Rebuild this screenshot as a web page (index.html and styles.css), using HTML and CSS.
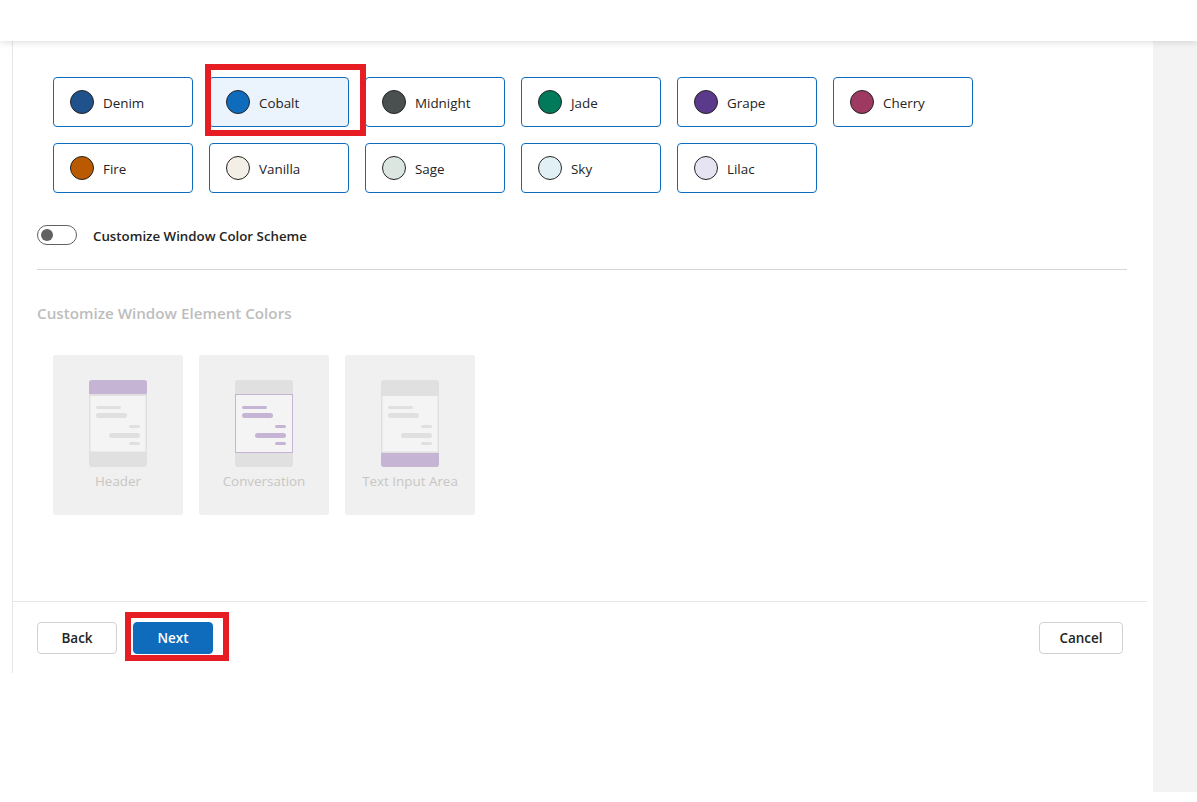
FILE: index.html
```html
<!DOCTYPE html>
<html>
<head>
<meta charset="utf-8">
<link rel="stylesheet" href="styles.css">
</head>
<body>
<header class="topbar"></header>
<div class="page">
  <main class="content">
    <section class="body">
      <div class="swatches">
        <div class="swatch"><span class="dot" style="background:#1f528b"></span><span class="sw-text">Denim</span></div>
        <div class="swatch selected"><span class="dot" style="background:#0f6cbd"></span><span class="sw-text">Cobalt</span><span class="mark mark-cobalt"></span></div>
        <div class="swatch"><span class="dot" style="background:#4a5050"></span><span class="sw-text">Midnight</span></div>
        <div class="swatch"><span class="dot" style="background:#007a5a"></span><span class="sw-text">Jade</span></div>
        <div class="swatch"><span class="dot" style="background:#5c3a8b"></span><span class="sw-text">Grape</span></div>
        <div class="swatch"><span class="dot" style="background:#9e3961"></span><span class="sw-text">Cherry</span></div>
        <div class="swatch"><span class="dot" style="background:#ba5a00"></span><span class="sw-text">Fire</span></div>
        <div class="swatch"><span class="dot" style="background:#f4efe6"></span><span class="sw-text">Vanilla</span></div>
        <div class="swatch"><span class="dot" style="background:#dbe6e0"></span><span class="sw-text">Sage</span></div>
        <div class="swatch"><span class="dot" style="background:#e1f0f4"></span><span class="sw-text">Sky</span></div>
        <div class="swatch"><span class="dot" style="background:#e6e3f3"></span><span class="sw-text">Lilac</span></div>
      </div>

      <div class="toggle-row">
        <span class="toggle"><span class="knob"></span></span>
        <span class="toggle-label">Customize Window Color Scheme</span>
      </div>

      <hr class="sep">

      <h2 class="subhead">Customize Window Element Colors</h2>

      <div class="elements">
        <div class="element">
          <svg width="58" height="87" viewBox="0 0 58 87">
            <rect width="58" height="87" rx="3" fill="#e0e0e0"/>
            <path d="M3 0h52a3 3 0 0 1 3 3v11H0V3a3 3 0 0 1 3-3z" fill="#c5b4d4"/>
            <rect x="1.5" y="16" width="55" height="55.5" fill="#f4f4f4"/>
            <rect x="7" y="26" width="25" height="3" rx="1.5" fill="#e0e0e0"/>
            <rect x="7" y="33" width="31" height="5" rx="2.5" fill="#e0e0e0"/>
            <rect x="40" y="45" width="11" height="3" rx="1.5" fill="#e0e0e0"/>
            <rect x="20" y="53" width="31" height="5" rx="2.5" fill="#e0e0e0"/>
            <rect x="40" y="62" width="11" height="3" rx="1.5" fill="#e0e0e0"/>
          </svg>
          <span class="el-label">Header</span>
        </div>
        <div class="element">
          <svg width="58" height="87" viewBox="0 0 58 87">
            <rect width="58" height="87" rx="3" fill="#e0e0e0"/>
            <rect x="0.5" y="14.5" width="57" height="58" fill="#f4f4f4" stroke="#c5b4d4"/>
            <rect x="7" y="26" width="25" height="3" rx="1.5" fill="#c5b4d4"/>
            <rect x="7" y="33" width="31" height="5" rx="2.5" fill="#c5b4d4"/>
            <rect x="40" y="45" width="11" height="3" rx="1.5" fill="#c5b4d4"/>
            <rect x="20" y="53" width="31" height="5" rx="2.5" fill="#c5b4d4"/>
            <rect x="40" y="62" width="11" height="3" rx="1.5" fill="#c5b4d4"/>
          </svg>
          <span class="el-label">Conversation</span>
        </div>
        <div class="element">
          <svg width="58" height="87" viewBox="0 0 58 87">
            <rect width="58" height="87" rx="3" fill="#e0e0e0"/>
            <rect x="1.5" y="16" width="55" height="55.5" fill="#f4f4f4"/>
            <path d="M0 73h58v11a3 3 0 0 1-3 3H3a3 3 0 0 1-3-3z" fill="#c5b4d4"/>
            <rect x="7" y="26" width="25" height="3" rx="1.5" fill="#e0e0e0"/>
            <rect x="7" y="33" width="31" height="5" rx="2.5" fill="#e0e0e0"/>
            <rect x="40" y="45" width="11" height="3" rx="1.5" fill="#e0e0e0"/>
            <rect x="20" y="53" width="31" height="5" rx="2.5" fill="#e0e0e0"/>
            <rect x="40" y="62" width="11" height="3" rx="1.5" fill="#e0e0e0"/>
          </svg>
          <span class="el-label">Text Input Area</span>
        </div>
      </div>
    </section>

    <footer class="footer">
      <div class="left-btns">
        <button class="btn">Back</button>
        <button class="btn primary">Next<span class="mark mark-next"></span></button>
      </div>
      <button class="btn cancel">Cancel</button>
    </footer>
  </main>
  <aside class="side"></aside>
</div>
</body>
</html>
```

FILE: styles.css
```css
* { box-sizing: border-box; }

html, body {
  margin: 0;
  padding: 0;
  background: #ffffff;
  font-family: "Open Sans", "Noto Sans", "Liberation Sans", sans-serif;
  color: #242424;
}

.topbar {
  height: 41px;
  background: #ffffff;
  box-shadow: 0 1px 7px rgba(0, 0, 0, 0.14);
  position: relative;
  z-index: 2;
}

.page {
  display: flex;
  height: 751px;
}

.content {
  width: 1135px;
  margin-left: 12px;
  height: 632px;
  border-left: 1px solid #e6e6e6;
  display: flex;
  flex-direction: column;
}

.body {
  padding: 36px 20px 0 24px;
  height: 560px;
}

.swatches {
  margin-left: 16px;
  display: grid;
  grid-template-columns: repeat(6, 140px);
  gap: 16px;
}

.swatch {
  position: relative;
  height: 50px;
  border: 1px solid #0f6cbd;
  border-radius: 4px;
  display: flex;
  align-items: center;
  padding-left: 16px;
  font-size: 13.4px;
  background: #ffffff;
}

.swatch.selected {
  background: #ebf3fc;
}

.sw-text {
  padding-top: 2px;
}

.dot {
  width: 24px;
  height: 24px;
  border-radius: 50%;
  border: 1px solid #242424;
  margin-right: 9px;
  flex: none;
}

.mark {
  position: absolute;
  border: 6px solid #e61e24;
  pointer-events: none;
}

.mark-cobalt {
  left: -5px;
  top: -14px;
  width: 161px;
  height: 72px;
}

.toggle-row {
  display: flex;
  align-items: center;
  margin-top: 32px;
  height: 20px;
}

.toggle {
  width: 40px;
  height: 20px;
  border: 1px solid #616161;
  border-radius: 10px;
  display: flex;
  align-items: center;
  padding-left: 3px;
}

.knob {
  width: 12px;
  height: 12px;
  border-radius: 50%;
  background: #616161;
}

.toggle-label {
  margin-left: 16px;
  padding-top: 2px;
  font-size: 13.3px;
  font-weight: 600;
}

.sep {
  margin: 24px 0 0 0;
  border: none;
  border-top: 1px solid #d6d6d6;
  height: 0;
}

.subhead {
  margin: 32px 0 0 0;
  font-size: 15.2px;
  line-height: 22px;
  font-weight: 600;
  color: #bdbdbd;
}

.elements {
  margin: 31px 0 0 16px;
  display: flex;
  gap: 16px;
}

.element {
  width: 130px;
  height: 160px;
  background: #f0f0f0;
  border-radius: 2px;
  display: flex;
  flex-direction: column;
  align-items: center;
  padding-top: 25px;
}

.element svg {
  display: block;
}

.el-label {
  margin-top: 4px;
  font-size: 13.4px;
  line-height: 20px;
  color: #c8c6c4;
}

.footer {
  border-top: 1px solid #e6e6e6;
  display: flex;
  justify-content: space-between;
  align-items: flex-start;
  padding: 20px 24px 0 24px;
  height: 72px;
}

.left-btns {
  display: flex;
  gap: 16px;
}

.btn {
  position: relative;
  width: 80px;
  height: 32px;
  border: 1px solid #d1d1d1;
  border-radius: 4px;
  background: #ffffff;
  font-family: inherit;
  font-size: 13.5px;
  font-weight: 600;
  color: #242424;
  padding: 0;
  cursor: pointer;
}

.btn.primary {
  background: #0f6cbd;
  border-color: #0f6cbd;
  color: #ffffff;
}

.btn.cancel {
  width: 84px;
}

.mark-next {
  left: -9px;
  top: -11px;
  width: 104px;
  height: 49px;
}

.side {
  margin-left: 6px;
  width: 44px;
  height: 751px;
  background: #f3f3f3;
}
```
